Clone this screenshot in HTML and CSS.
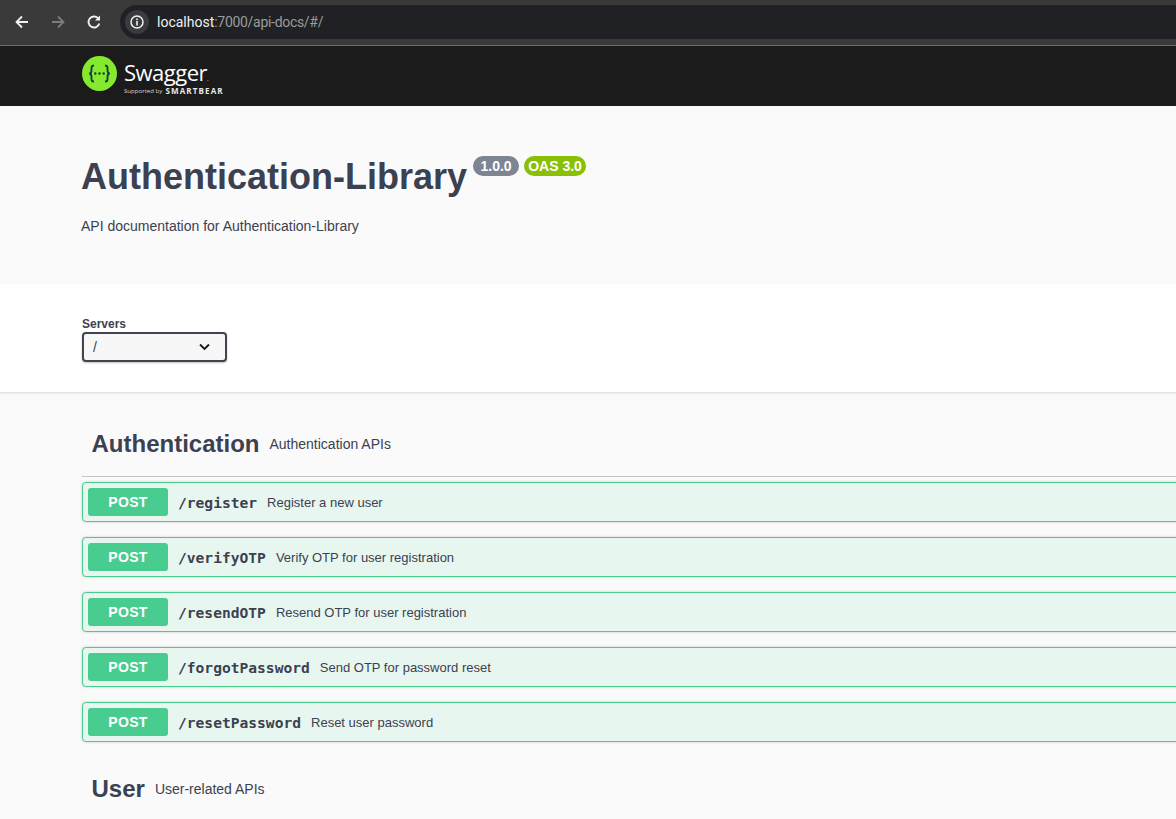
FILE: index.html
```html
<!DOCTYPE html>
<html>
<head>
    <title>Swagger UI</title>
    <link rel="stylesheet" href="styles.css">
</head>
<body>
    <div class="chrome-bar">
        <div class="nav-icon">
            <svg width="16" height="16" viewBox="0 0 16 16"><path d="M14 8H3M8 2.500 2.500 8 8 13.500" fill="none" stroke="#f1f1f1" stroke-width="1.800"/></svg>
        </div>
        <div class="nav-icon">
            <svg width="16" height="16" viewBox="0 0 16 16"><path d="M2 8h11M8 2.500 13.500 8 8 13.500" fill="none" stroke="#7c7c7c" stroke-width="1.800"/></svg>
        </div>
        <div class="nav-icon">
            <svg width="16" height="16" viewBox="0 0 16 16"><path d="M13.300 9.500A5.500 5.500 0 1 1 12 4.200" fill="none" stroke="#f1f1f1" stroke-width="1.900"/><path d="M14 1.500V6.500H9Z" fill="#f1f1f1"/></svg>
        </div>
        <div class="address-bar">
            <div class="site-info">
                <svg width="16" height="16" viewBox="0 0 16 16"><circle cx="8" cy="8" r="6" fill="none" stroke="#f1f1f1" stroke-width="1.500"/><rect x="7.200" y="7" width="1.600" height="4.500" fill="#f1f1f1"/><rect x="7.200" y="4.500" width="1.600" height="1.600" fill="#f1f1f1"/></svg>
            </div>
            <span class="url-host">localhost</span><span class="url-rest">:7000/api-docs/#/</span>
        </div>
    </div>

    <div class="topbar">
        <div class="logo">
            <svg width="35" height="35" viewBox="0 0 35 35">
                <circle cx="17.500" cy="17.500" r="17.500" fill="#85ea2d"/>
                <path d="M12 9.500c-3 0-2.500 2-2.500 4.500 0 2-.7 3.500-2.300 3.500 1.600 0 2.300 1.500 2.300 3.500 0 2.500-.5 4.500 2.500 4.500M23 9.500c3 0 2.500 2 2.500 4.500 0 2 .7 3.500 2.300 3.500-1.600 0-2.300 1.500-2.300 3.500 0 2.500.5 4.500-2.500 4.500" fill="none" stroke="#173647" stroke-width="1.800"/>
                <circle cx="13.300" cy="17.500" r="1.200" fill="#173647"/>
                <circle cx="17.500" cy="17.500" r="1.200" fill="#173647"/>
                <circle cx="21.700" cy="17.500" r="1.200" fill="#173647"/>
            </svg>
            <div class="logo-text">
                <div class="logo-name">Swagger<span class="logo-dot">.</span></div>
                <div class="logo-sub"><span class="logo-by">Supported by</span><span class="logo-bear">SMARTBEAR</span></div>
            </div>
        </div>
    </div>

    <section class="info">
        <div class="title-row">
            <h1 class="title">Authentication-Library</h1>
            <span class="version-badge">1.0.0</span>
            <span class="oas-badge">OAS 3.0</span>
        </div>
        <p class="description">API documentation for Authentication-Library</p>
    </section>

    <section class="servers">
        <div class="servers-label">Servers</div>
        <div class="server-select">
            <span class="server-value">/</span>
            <svg width="11" height="8" viewBox="0 0 11 8"><path d="M1 1.500 5.500 6 10 1.500" fill="none" stroke="#1b1b1b" stroke-width="1.900"/></svg>
        </div>
    </section>

    <section class="operations">
        <div class="tag-header">
            <h3 class="tag-name">Authentication</h3>
            <span class="tag-desc">Authentication APIs</span>
        </div>

        <div class="op-block">
            <span class="method">POST</span>
            <span class="op-path">/register</span>
            <span class="op-summary">Register a new user</span>
        </div>
        <div class="op-block">
            <span class="method">POST</span>
            <span class="op-path">/verifyOTP</span>
            <span class="op-summary">Verify OTP for user registration</span>
        </div>
        <div class="op-block">
            <span class="method">POST</span>
            <span class="op-path">/resendOTP</span>
            <span class="op-summary">Resend OTP for user registration</span>
        </div>
        <div class="op-block">
            <span class="method">POST</span>
            <span class="op-path">/forgotPassword</span>
            <span class="op-summary">Send OTP for password reset</span>
        </div>
        <div class="op-block">
            <span class="method">POST</span>
            <span class="op-path">/resetPassword</span>
            <span class="op-summary">Reset user password</span>
        </div>

        <div class="tag-header tag-user">
            <h3 class="tag-name">User</h3>
            <span class="tag-desc">User-related APIs</span>
        </div>
    </section>
</body>
</html>
```

FILE: styles.css
```css
html, body {
    margin: 0;
    padding: 0;
    height: 819px;
    overflow: hidden;
}
body {
    background-color: #fafafa;
    font-family: "Liberation Sans", Arial, sans-serif;
    color: #3b4151;
}

.chrome-bar {
    display: flex;
    align-items: center;
    height: 44px;
    padding: 0 0 1px 14px;
    background-color: #3a3a3a;
    border-bottom: 1px solid #6e6e6e;
}
.nav-icon {
    display: flex;
    width: 16px;
    height: 16px;
    margin-right: 20px;
}
.address-bar {
    display: flex;
    align-items: center;
    flex: 1;
    height: 34px;
    margin-left: -2px;
    border-radius: 17px 0 0 17px;
    background-color: #202124;
    font-family: "Roboto", "Liberation Sans", sans-serif;
    font-size: 14px;
}
.site-info {
    display: flex;
    align-items: center;
    justify-content: center;
    width: 24px;
    height: 24px;
    margin: 0 8px 0 5px;
    border-radius: 50%;
    background-color: #3a3b3e;
}
.url-host {
    color: #f1f1f1;
}
.url-rest {
    color: #9b9b9b;
    letter-spacing: -0.3px;
}

.topbar {
    height: 50px;
    padding: 10px 0 0 82px;
    background-color: #1b1b1b;
}
.logo {
    display: flex;
    align-items: flex-start;
}
.logo-text {
    margin: 3px 0 0 7px;
    color: #fff;
}
.logo-name {
    font-family: "Open Sans", sans-serif;
    font-size: 22px;
    line-height: 26px;
    letter-spacing: -0.5px;
}
.logo-dot {
    font-size: 6px;
}
.logo-sub {
    display: flex;
    align-items: center;
    height: 9px;
    margin-top: -6px;
}
.logo-by {
    font-family: "Open Sans", sans-serif;
    font-size: 6.100px;
    color: #d5d5d5;
}
.logo-bear {
    margin-left: 3px;
    font-family: "Open Sans", sans-serif;
    font-size: 8px;
    font-weight: 700;
    letter-spacing: 1.150px;
    color: #e8e8e8;
}

.info {
    height: 178px;
    padding-left: 81px;
    box-sizing: border-box;
    padding-top: 49px;
    background-color: #fafafa;
}
.title-row {
    display: flex;
    align-items: flex-start;
}
.title {
    margin: 0;
    font-size: 36px;
    line-height: 43px;
    font-weight: 700;
}
.version-badge, .oas-badge {
    margin-top: 1px;
    height: 20px;
    border-radius: 10px;
    color: #fff;
    font-size: 14px;
    line-height: 20px;
    font-weight: 700;
}
.version-badge {
    margin-left: 6px;
    padding: 0 7.500px;
    background-color: #7d8492;
}
.oas-badge {
    margin-left: 5px;
    padding: 0 4px;
    background-color: #89bf04;
}
.description {
    margin: 19px 0 0 0;
    font-size: 14px;
    line-height: 18px;
}

.servers {
    height: 109px;
    padding: 33px 0 0 82px;
    box-sizing: border-box;
    background-color: #fff;
    border-bottom: 1px solid #e2e2e2;
    box-shadow: 0 1px 1px rgba(0, 0, 0, 0.05);
}
.servers-label {
    font-size: 12px;
    line-height: 14px;
    font-weight: 700;
}
.server-select {
    display: flex;
    align-items: center;
    justify-content: space-between;
    width: 145px;
    height: 30px;
    margin-top: 1px;
    padding: 0 15px 0 9px;
    box-sizing: border-box;
    border: 2px solid #41444e;
    border-radius: 4px;
    background-color: #f7f7f7;
    box-shadow: 0 1px 2px rgba(0, 0, 0, 0.25);
}
.server-value {
    font-size: 14px;
    color: #3b4151;
}

.operations {
    padding-left: 82px;
    margin-right: -40px;
}
.tag-header {
    display: flex;
    align-items: center;
    height: 84px;
    box-sizing: border-box;
    padding: 18px 0 0 9.500px;
    margin-bottom: 5px;
    border-bottom: 1px solid #c4c5c9;
}
.tag-name {
    margin: 0;
    font-size: 24px;
    line-height: 32px;
    font-weight: 700;
}
.tag-desc {
    margin-left: 10px;
    font-size: 14px;
}
.tag-user {
    height: 46px;
    padding: 0 0 0 9.500px;
    margin-top: 24px;
    border-bottom: none;
}

.op-block {
    display: flex;
    align-items: center;
    height: 40px;
    margin-bottom: 15px;
    padding-left: 5px;
    box-sizing: border-box;
    border: 1px solid #49cc90;
    border-radius: 4px;
    background-color: #e8f6f0;
    box-shadow: 0 0 3px rgba(0, 0, 0, 0.19);
}
.method {
    width: 80px;
    height: 28px;
    border-radius: 3px;
    background-color: #49cc90;
    color: #fff;
    font-size: 14px;
    line-height: 28px;
    font-weight: 700;
    letter-spacing: 0.3px;
    text-align: center;
}
.op-path {
    margin-left: 10px;
    font-family: "DejaVu Sans Mono", monospace;
    font-size: 14.600px;
    font-weight: 700;
}
.op-summary {
    margin-left: 10px;
    font-size: 13px;
}
```
